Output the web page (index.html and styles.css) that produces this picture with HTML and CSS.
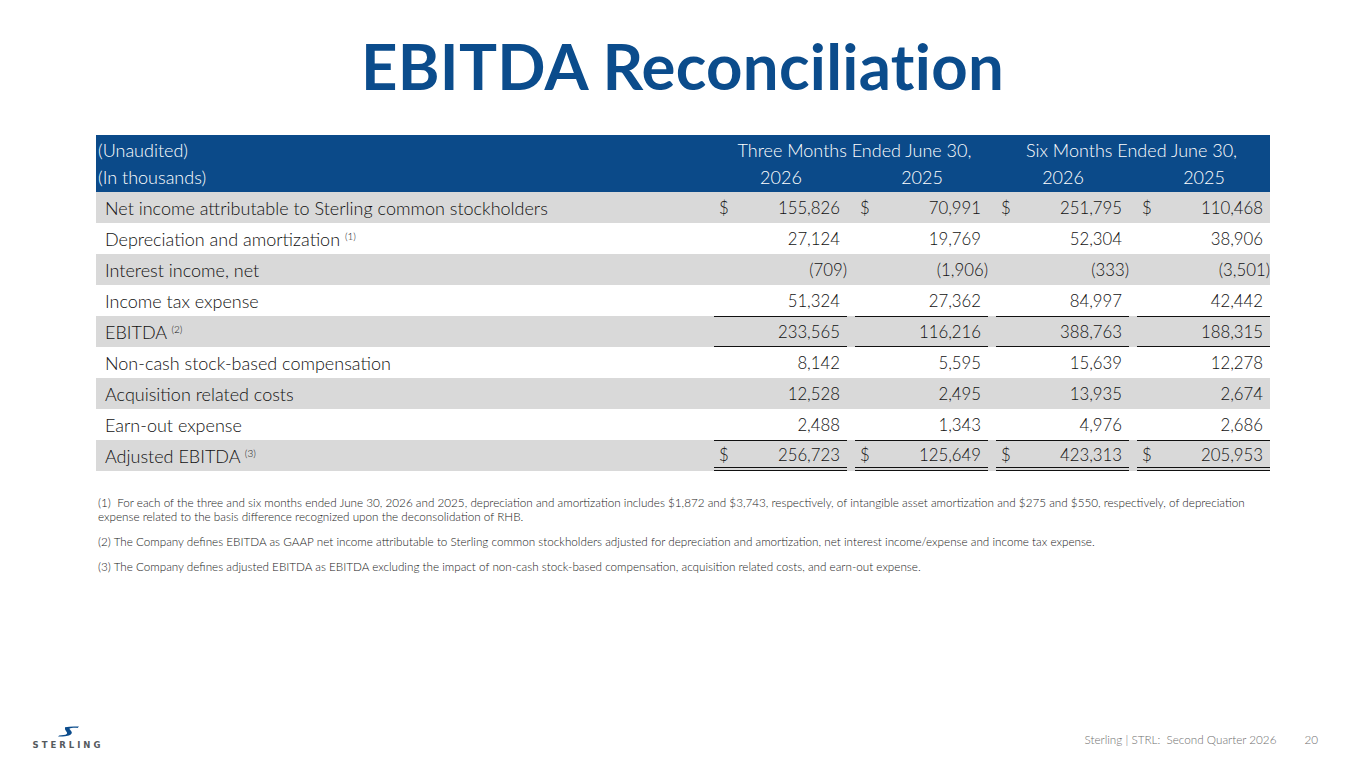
FILE: index.html
```html
<!DOCTYPE html>
<html>
<head>
<meta charset="utf-8">
<link rel="stylesheet" href="styles.css">
</head>
<body>
<div class="slide">
  <h1 class="title">EBITDA Reconciliation</h1>
  <table class="recon">
    <colgroup>
      <col class="c-lbl">
      <col class="c-num">
      <col class="c-num">
      <col class="c-num">
      <col class="c-num">
    </colgroup>
    <thead>
      <tr class="h1row">
        <th class="lbl">(Unaudited)</th>
        <th colspan="2" class="grp grp1">Three Months Ended June 30,</th>
        <th colspan="2" class="grp grp2">Six Months Ended June 30,</th>
      </tr>
      <tr class="h2row">
        <th class="lbl">(In thousands)</th>
        <th class="yr">2026</th>
        <th class="yr">2025</th>
        <th class="yr">2026</th>
        <th class="yr">2025</th>
      </tr>
    </thead>
    <tbody>
      <tr class="g">
        <td class="lbl">Net income attributable to Sterling common stockholders</td>
        <td><div class="v"><span>$</span><span>155,826</span></div></td>
        <td><div class="v"><span>$</span><span>70,991</span></div></td>
        <td><div class="v"><span>$</span><span>251,795</span></div></td>
        <td><div class="v"><span>$</span><span>110,468</span></div></td>
      </tr>
      <tr>
        <td class="lbl">Depreciation and amortization <sup>(1)</sup></td>
        <td><div class="v"><span></span><span>27,124</span></div></td>
        <td><div class="v"><span></span><span>19,769</span></div></td>
        <td><div class="v"><span></span><span>52,304</span></div></td>
        <td><div class="v"><span></span><span>38,906</span></div></td>
      </tr>
      <tr class="g">
        <td class="lbl">Interest income, net</td>
        <td><div class="v"><span></span><span class="neg">(709)</span></div></td>
        <td><div class="v"><span></span><span class="neg">(1,906)</span></div></td>
        <td><div class="v"><span></span><span class="neg">(333)</span></div></td>
        <td><div class="v"><span></span><span class="neg">(3,501)</span></div></td>
      </tr>
      <tr>
        <td class="lbl">Income tax expense</td>
        <td><div class="v"><span></span><span>51,324</span></div></td>
        <td><div class="v"><span></span><span>27,362</span></div></td>
        <td><div class="v"><span></span><span>84,997</span></div></td>
        <td><div class="v"><span></span><span>42,442</span></div></td>
      </tr>
      <tr class="g">
        <td class="lbl">EBITDA <sup>(2)</sup></td>
        <td><div class="v top bot"><span></span><span>233,565</span></div></td>
        <td><div class="v top bot"><span></span><span>116,216</span></div></td>
        <td><div class="v top bot"><span></span><span>388,763</span></div></td>
        <td><div class="v top bot"><span></span><span>188,315</span></div></td>
      </tr>
      <tr>
        <td class="lbl">Non-cash stock-based compensation</td>
        <td><div class="v"><span></span><span>8,142</span></div></td>
        <td><div class="v"><span></span><span>5,595</span></div></td>
        <td><div class="v"><span></span><span>15,639</span></div></td>
        <td><div class="v"><span></span><span>12,278</span></div></td>
      </tr>
      <tr class="g">
        <td class="lbl">Acquisition related costs</td>
        <td><div class="v"><span></span><span>12,528</span></div></td>
        <td><div class="v"><span></span><span>2,495</span></div></td>
        <td><div class="v"><span></span><span>13,935</span></div></td>
        <td><div class="v"><span></span><span>2,674</span></div></td>
      </tr>
      <tr>
        <td class="lbl">Earn-out expense</td>
        <td><div class="v"><span></span><span>2,488</span></div></td>
        <td><div class="v"><span></span><span>1,343</span></div></td>
        <td><div class="v"><span></span><span>4,976</span></div></td>
        <td><div class="v"><span></span><span>2,686</span></div></td>
      </tr>
      <tr class="g">
        <td class="lbl">Adjusted EBITDA <sup>(3)</sup></td>
        <td><div class="v top dbl"><span>$</span><span>256,723</span></div></td>
        <td><div class="v top dbl"><span>$</span><span>125,649</span></div></td>
        <td><div class="v top dbl"><span>$</span><span>423,313</span></div></td>
        <td><div class="v top dbl"><span>$</span><span>205,953</span></div></td>
      </tr>
    </tbody>
  </table>
  <div class="notes">
    <p>(1)&nbsp; For each of the three and six months ended June 30, 2026 and 2025, depreciation and amortization includes $1,872 and $3,743, respectively, of intangible asset amortization and $275 and $550, respectively, of depreciation expense related to the basis difference recognized upon the deconsolidation of RHB.</p>
    <p>(2) The Company defines EBITDA as GAAP net income attributable to Sterling common stockholders adjusted for depreciation and amortization, net interest income/expense and income tax expense.</p>
    <p>(3) The Company defines adjusted EBITDA as EBITDA excluding the impact of non-cash stock-based compensation, acquisition related costs, and earn-out expense.</p>
  </div>
  <div class="footer">
    <div class="logo">
      <svg class="swoosh" width="22" height="11" viewBox="0 0 22 11">
        <path d="M7 1.2 C11 0.4 16 0.3 21 0.6 L19.5 1.9 C16 1.7 12.5 1.9 11.6 2.6 C11 3.3 13.6 4.8 13.8 6.6 C14 8.6 11 9.9 7 10.3 C4.5 10.6 2 10.6 0 10.5 L1.2 9.5 C4 9.4 7.5 9 8.7 8 C10 6.8 7.5 5 7.1 3.6 C6.9 2.7 7 1.8 7 1.2 Z" fill="#0b4c8c"/>
      </svg>
      <span class="word">STERLING</span>
    </div>
    <div class="foot-right">
      <span class="ftxt">Sterling | STRL:&nbsp; Second Quarter 2026</span>
      <span class="pg">20</span>
    </div>
  </div>
</div>
</body>
</html>
```

FILE: styles.css
```css
* { box-sizing: border-box; }
html, body { margin: 0; padding: 0; background: #fff; }
body { font-family: "Lato", "Noto Sans", sans-serif; color: #222; }

.slide {
  width: 1365px;
  height: 768px;
  display: flex;
  flex-direction: column;
  overflow: hidden;
}

.title {
  margin: 30px 0 0 0;
  height: 105px;
  text-align: center;
  font-size: 63.5px;
  line-height: 72px;
  font-weight: 700;
  color: #0b4c8c;
  letter-spacing: 0.3px;
}

.recon {
  margin: 0 95px 0 96px;
  width: 1174px;
  border-collapse: collapse;
  table-layout: fixed;
  font-size: 18px;
  font-weight: 300;
  color: #111;
}
.recon .c-lbl { width: 610px; }
.recon .c-num { width: 141px; }
.recon th, .recon td { padding: 0; font-weight: 300; }
.recon thead tr { background: #0b4a89; color: #fff; }
.recon .h1row th { height: 29px; padding-top: 1px; }
.recon .h2row th { height: 28px; padding-bottom: 2px; }
.recon th.lbl { text-align: left; padding-left: 2px; }
.recon th.grp { text-align: center; }
.recon th.grp1 { padding-left: 15px; }
.recon th.grp2 { padding-left: 5px; }
.recon th.yr { text-align: center; padding-left: 9px; }

.recon tbody tr { height: 31px; }
.recon tbody tr.g { background: #d9d9d9; }
.recon td.lbl { padding-left: 9px; }
.recon sup { font-size: 10px; vertical-align: 6px; line-height: 0; }

.recon td { vertical-align: middle; }
.v {
  display: flex;
  justify-content: space-between;
  align-items: center;
  margin: 0 0 0 8px;
  height: 31px;
  padding: 0 7px 0 5px;
  font-size: 16.8px;
}
.v.top { border-top: 1.5px solid #111; }
.v.bot { border-bottom: 1.5px solid #111; }
.v.dbl { border-bottom: 4px double #111; }
.v span.neg { margin-right: -7px; }

.notes {
  margin: 24px 100px 0 98px;
  font-size: 11.7px;
  font-weight: 300;
  line-height: 14px;
  color: #222;
}
.notes p { margin: 0 0 11px 0; }

.footer {
  margin-top: auto;
  height: 60px;
  display: flex;
  justify-content: space-between;
  align-items: flex-start;
  padding: 18px 47px 0 31px;
}
.logo {
  display: flex;
  flex-direction: column;
  align-items: center;
  width: 71px;
}
.swoosh { margin-left: 4px; }
.word {
  margin-top: 3px;
  font-family: "DejaVu Sans", sans-serif;
  font-weight: 700;
  font-size: 8.5px;
  letter-spacing: 3px;
  color: #555a5e;
  margin-right: -3px;
}
.foot-right {
  display: flex;
  gap: 28px;
  font-size: 11.7px;
  font-weight: 300;
  color: #6f6f6f;
  padding-top: 6px;
}
```
